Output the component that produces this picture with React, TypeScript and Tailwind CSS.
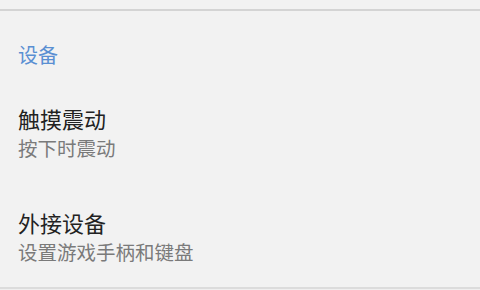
const rows = [
  { title: '触摸震动', summary: '按下时震动' },
  { title: '外接设备', summary: '设置游戏手柄和键盘' },
];

export default function App() {
  return (
    <div
      className="flex h-[290px] w-[480px] flex-col overflow-hidden bg-[#f2f2f2]"
      style={{ fontFamily: '"Noto Sans CJK SC", "Noto Sans", sans-serif' }}
    >
      <div className="h-[9px] shrink-0" />
      <div className="h-[2px] shrink-0 bg-[#d4d4d4]" />
      <div className="px-[18px] pb-[15px] pt-[34px]">
        <h2 className="text-[20px] leading-[20px] text-[#5a8fd2]">设备</h2>
      </div>
      {rows.map((row) => (
        <div key={row.title} className="flex flex-col px-[18px] pb-[26px] pt-[27px]">
          <span className="text-[22px] leading-[22px] text-[#222222]">{row.title}</span>
          <span className="mt-[9px] text-[19.5px] leading-[19.5px] text-[#7a7a7a]">{row.summary}</span>
        </div>
      ))}
      <div className="h-[2px] shrink-0 bg-[#dcdcdc]" />
      <div className="flex-1 bg-[#efefef]" />
    </div>
  );
}
